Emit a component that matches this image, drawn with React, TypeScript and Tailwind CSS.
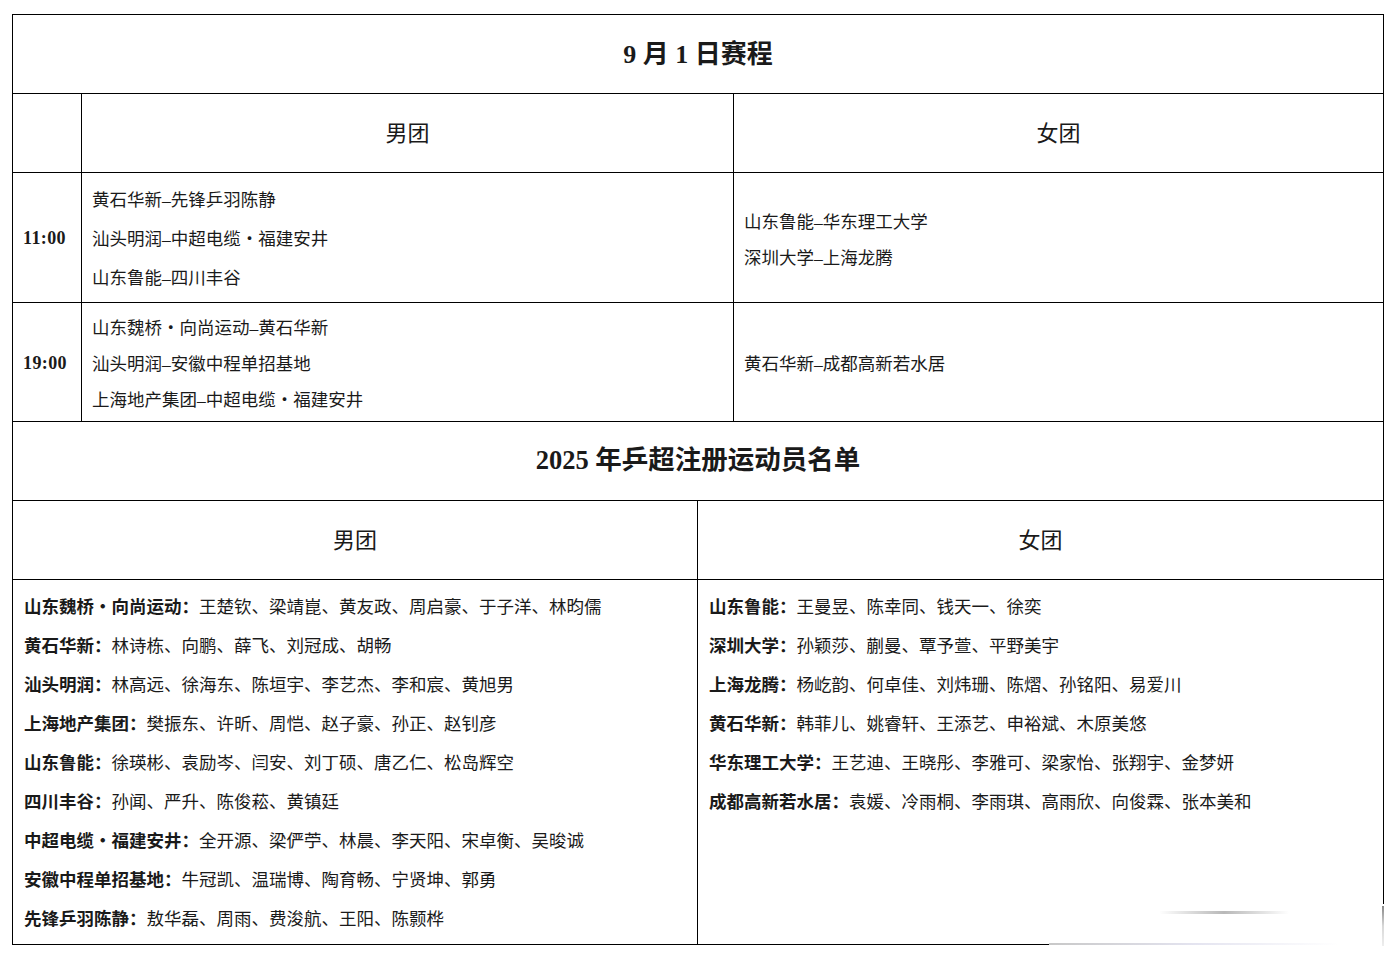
import React from 'react';

const FONT = { fontFamily: '"Liberation Serif", "Noto Sans CJK SC", serif' };

const menTeams: [string, string][] = [
  ['山东魏桥・向尚运动：', '王楚钦、梁靖崑、黄友政、周启豪、于子洋、林昀儒'],
  ['黄石华新：', '林诗栋、向鹏、薛飞、刘冠成、胡畅'],
  ['汕头明润：', '林高远、徐海东、陈垣宇、李艺杰、李和宸、黄旭男'],
  ['上海地产集团：', '樊振东、许昕、周恺、赵子豪、孙正、赵钊彦'],
  ['山东鲁能：', '徐瑛彬、袁励岑、闫安、刘丁硕、唐乙仁、松岛辉空'],
  ['四川丰谷：', '孙闻、严升、陈俊菘、黄镇廷'],
  ['中超电缆・福建安井：', '全开源、梁俨苧、林晨、李天阳、宋卓衡、吴晙诚'],
  ['安徽中程单招基地：', '牛冠凯、温瑞博、陶育畅、宁贤坤、郭勇'],
  ['先锋乒羽陈静：', '敖华磊、周雨、费浚航、王阳、陈颢桦'],
];

const womenTeams: [string, string][] = [
  ['山东鲁能：', '王曼昱、陈幸同、钱天一、徐奕'],
  ['深圳大学：', '孙颖莎、蒯曼、覃予萱、平野美宇'],
  ['上海龙腾：', '杨屹韵、何卓佳、刘炜珊、陈熠、孙铭阳、易爱川'],
  ['黄石华新：', '韩菲儿、姚睿轩、王添艺、申裕斌、木原美悠'],
  ['华东理工大学：', '王艺迪、王晓彤、李雅可、梁家怡、张翔宇、金梦妍'],
  ['成都高新若水居：', '袁媛、冷雨桐、李雨琪、高雨欣、向俊霖、张本美和'],
];

const Lines = ({ items, leading }: { items: string[]; leading: string }) => (
  <div className={`flex flex-col justify-center h-full pt-[4px] px-[10px] text-[17.5px] ${leading}`}>
    {items.map((t) => (
      <div key={t} className="whitespace-nowrap">{t}</div>
    ))}
  </div>
);

const Roster = ({ teams }: { teams: [string, string][] }) => (
  <div className="pt-[8px] px-[11px] text-[17.5px] leading-[39px]">
    {teams.map(([team, players]) => (
      <div key={team} className="whitespace-nowrap">
        <span className="font-bold">{team}</span>
        {players}
      </div>
    ))}
  </div>
);

export default function App() {
  return (
    <div className="relative w-[1395px] h-[956px] bg-white text-[#1a1a1a]" style={FONT}>
      <div className="absolute left-[12px] top-[14px] w-[1372px] border border-black">
        {/* 9月1日赛程 */}
        <div className="h-[79px] flex items-center justify-center border-b border-black text-[26px] font-bold">
          9 月 1 日赛程
        </div>

        <div className="grid grid-cols-[69px_652px_1fr] border-b border-black h-[79px] text-[22px]">
          <div className="border-r border-black" />
          <div className="border-r border-black flex items-center justify-center">男团</div>
          <div className="flex items-center justify-center">女团</div>
        </div>

        <div className="grid grid-cols-[69px_652px_1fr] border-b border-black h-[130px]">
          <div className="border-r border-black flex items-center pl-[10px] pt-[2px] text-[18px] font-bold tracking-[0.4px]">11:00</div>
          <div className="border-r border-black">
            <Lines
              leading="leading-[39px]"
              items={['黄石华新–先锋乒羽陈静', '汕头明润–中超电缆・福建安井', '山东鲁能–四川丰谷']}
            />
          </div>
          <div>
            <Lines leading="leading-[36px]" items={['山东鲁能–华东理工大学', '深圳大学–上海龙腾']} />
          </div>
        </div>

        <div className="grid grid-cols-[69px_652px_1fr] border-b border-black h-[119px]">
          <div className="border-r border-black flex items-center pl-[10px] pt-[2px] text-[18px] font-bold tracking-[0.4px]">19:00</div>
          <div className="border-r border-black">
            <Lines
              leading="leading-[36px]"
              items={['山东魏桥・向尚运动–黄石华新', '汕头明润–安徽中程单招基地', '上海地产集团–中超电缆・福建安井']}
            />
          </div>
          <div>
            <Lines leading="leading-[36px]" items={['黄石华新–成都高新若水居']} />
          </div>
        </div>

        {/* 注册名单 */}
        <div className="h-[79px] flex items-center justify-center border-b border-black text-[26.5px] font-bold">
          2025 年乒超注册运动员名单
        </div>

        <div className="grid grid-cols-[685px_1fr] border-b border-black h-[79px] text-[22px]">
          <div className="border-r border-black flex items-center justify-center">男团</div>
          <div className="flex items-center justify-center">女团</div>
        </div>

        <div className="grid grid-cols-[685px_1fr] h-[364px]">
          <div className="border-r border-black">
            <Roster teams={menTeams} />
          </div>
          <div>
            <Roster teams={womenTeams} />
          </div>
        </div>
      </div>

      {/* watermark smear over the bottom-right corner */}
      <div className="absolute left-[1049px] top-[904px] w-[346px] h-[48px] bg-white">
        <div className="absolute left-[110px] top-[7px] w-[130px] h-[3px] rounded-full bg-gradient-to-r from-transparent via-[#b8b8b8] to-transparent" />
        <div className="absolute left-[0px] top-[39px] w-[290px] h-[2px] bg-gradient-to-r from-[#c8c8c8] via-[#e4e4f0] to-transparent" />
        <div className="absolute left-[333px] top-[2px] w-[2px] h-[40px] bg-gradient-to-b from-[#888] via-[#d8d8d8] to-[#eee]" />
      </div>
    </div>
  );
}
